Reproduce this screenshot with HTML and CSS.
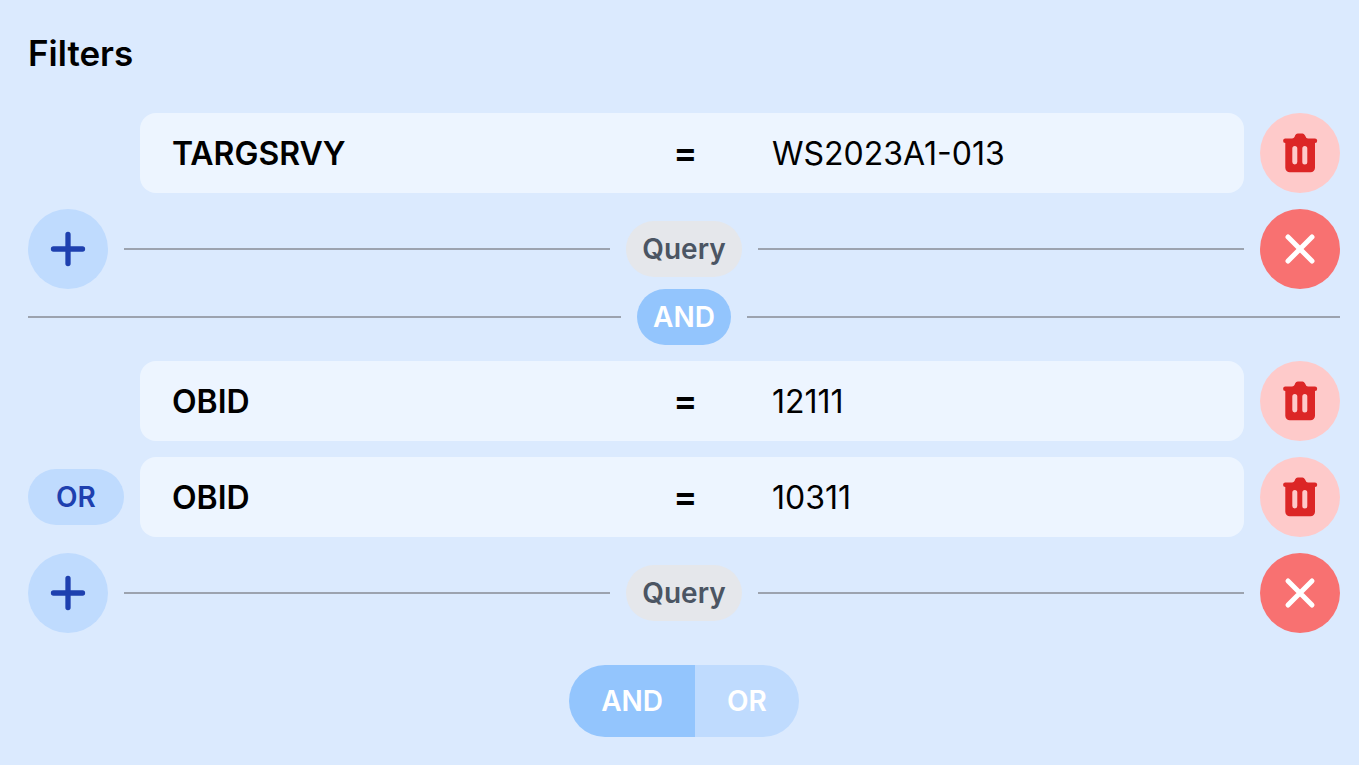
FILE: index.html
```html
<!DOCTYPE html>
<html lang="en">
<head>
<meta charset="utf-8">
<meta name="viewport" content="width=device-width, initial-scale=1">
<title>Filters</title>
<link rel="stylesheet" href="styles.css">
</head>
<body>
<svg class="defs" aria-hidden="true">
  <symbol id="plus" viewBox="0 0 48 48"><path d="M24 9.500v29M9.500 24h29" fill="none" stroke="currentColor" stroke-width="5.300" stroke-linecap="round"/></symbol>
  <symbol id="close" viewBox="0 0 48 48"><path d="M12 12l24 24M36 12L12 36" fill="none" stroke="currentColor" stroke-width="5" stroke-linecap="round"/></symbol>
  <symbol id="trash" viewBox="0 0 48 48"><path fill="currentColor" fill-rule="evenodd" d="M21.800 4.500Q20 4.500 19.200 6.300Q18.200 9.500 16 9.500H9.500a2.300 2.300 0 0 0-.2 4.600V38.800a4.500 4.500 0 0 0 4.500 4.500H34.500a4.500 4.500 0 0 0 4.500-4.500V14.100a2.300 2.300 0 0 0-.2-4.600H32Q30 9.500 28.900 6.300Q28 4.500 26.500 4.500zM16.300 19.500a2.500 2.500 0 0 1 5 0v13.500a2.500 2.500 0 0 1-5 0zM26.300 19.500a2.500 2.500 0 0 1 5 0v13.500a2.500 2.500 0 0 1-5 0z"/></symbol>
</svg>
<main class="filters">
  <h1 class="title">Filters</h1>
  <section class="group">
    <div class="row">
      <div class="side"></div>
      <div class="card"><span class="name">TARGSRVY</span><span class="operator">=</span><span class="value">WS2023A1-013</span></div>
      <button class="round delete" type="button" aria-label="Delete filter"><svg class="icon"><use href="#trash"/></svg></button>
    </div>
    <div class="row">
      <button class="round add" type="button" aria-label="Add filter"><svg class="icon"><use href="#plus"/></svg></button>
      <div class="divider"><span class="pill query">Query</span></div>
      <button class="round remove" type="button" aria-label="Remove query"><svg class="icon"><use href="#close"/></svg></button>
    </div>
  </section>
  <div class="divider"><button class="pill and" type="button">AND</button></div>
  <section class="group">
    <div class="row">
      <div class="side"></div>
      <div class="card"><span class="name">OBID</span><span class="operator">=</span><span class="value">12111</span></div>
      <button class="round delete" type="button" aria-label="Delete filter"><svg class="icon"><use href="#trash"/></svg></button>
    </div>
    <div class="row">
      <div class="side"><button class="pill or" type="button">OR</button></div>
      <div class="card"><span class="name">OBID</span><span class="operator">=</span><span class="value">10311</span></div>
      <button class="round delete" type="button" aria-label="Delete filter"><svg class="icon"><use href="#trash"/></svg></button>
    </div>
    <div class="row">
      <button class="round add" type="button" aria-label="Add filter"><svg class="icon"><use href="#plus"/></svg></button>
      <div class="divider"><span class="pill query">Query</span></div>
      <button class="round remove" type="button" aria-label="Remove query"><svg class="icon"><use href="#close"/></svg></button>
    </div>
  </section>
  <div class="combine">
    <button class="combine-and" type="button">AND</button><button class="combine-or" type="button">OR</button>
  </div>
</main>
</body>
</html>
```
FILE: styles.css
```css
* { box-sizing: border-box; }
body { margin: 0; background: #dbeafe; color: #000; font-family: Inter, "Liberation Sans", sans-serif; }
button { border: 0; padding: 0; font-family: inherit; cursor: pointer; }
.defs { position: absolute; width: 0; height: 0; }
.filters { padding: 25px 19px 28px 28px; }
.title { margin: 0 0 32px; font-size: 35px; line-height: 56px; font-weight: 600; }
.group { display: flex; flex-direction: column; gap: 16px; }
.row { display: flex; align-items: center; gap: 16px; }
.side { width: 96px; flex: none; }
.card { flex: 1; padding: 17px 32px 15px; border-radius: 16px; background: #edf5ff; display: grid; grid-template-columns: 32fr 13fr 33fr; align-items: center; font-size: 32px; line-height: 48px; }
.name, .operator { font-weight: 600; }
.operator { text-align: center; font-size: 36px; line-height: 44px; padding-bottom: 4px; }
.round { width: 80px; height: 80px; flex: none; border-radius: 50%; display: grid; place-items: center; }
.icon { width: 48px; height: 48px; display: block; }
.delete { background: #fecaca; color: #dc2626; }
.add { background: #bfdbfe; color: #1e40af; }
.remove { background: #f87171; color: #fff; }
.divider { flex: 1; display: flex; align-items: center; gap: 16px; }
.divider::before, .divider::after { content: ""; flex: 1; height: 2px; background: #9ca3af; }
.pill { height: 56px; padding: 0 16px; border-radius: 28px; font-size: 28px; line-height: 56px; font-weight: 600; }
.query { background: #e5e7eb; color: #4b5563; }
.and { background: #93c5fd; color: #fff; }
.or { width: 100%; background: #bfdbfe; color: #1e40af; }
.divider + .group { margin-top: 16px; }
.combine { width: max-content; margin: 32px auto 0; display: flex; border-radius: 36px; overflow: hidden; }
.combine button { height: 72px; padding: 0 32px; color: #fff; font-size: 28px; line-height: 40px; font-weight: 600; }
.combine .combine-and { background: #93c5fd; }
.combine .combine-or { background: #bfdbfe; }
```
